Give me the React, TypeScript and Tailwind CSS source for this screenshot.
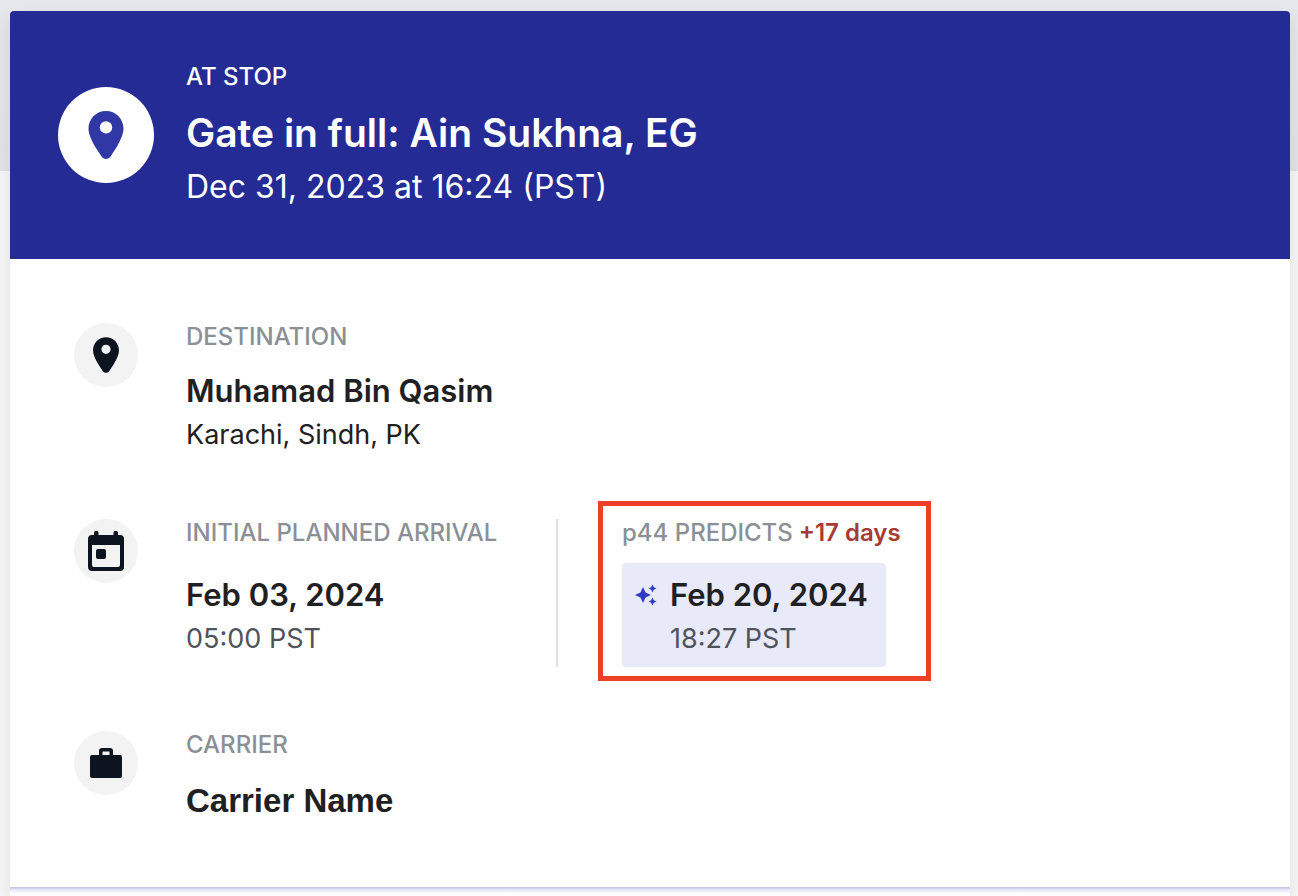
import type { ReactNode } from 'react';

interface DetailRowProps {
  icon: ReactNode;
  children: ReactNode;
}

const PIN_PATH =
  'M17.5 0C7.8 0 0 7.8 0 17.6 0 23.6 3.4 30 6.3 35.2L13 45.6C15 48.8 20 48.8 22 45.6L28.7 35.2C31.6 30 35 23.6 35 17.6 35 7.8 27.2 0 17.5 0ZM17.5 10.2a6.2 6.2 0 1 1 0 12.4A6.2 6.2 0 0 1 17.5 10.2Z';

function PinIcon({ className }: { className: string }) {
  return (
    <svg viewBox="0 0 35 48" fill="currentColor" fillRule="evenodd" className={className} aria-hidden="true">
      <path d={PIN_PATH} />
    </svg>
  );
}

function CalendarIcon() {
  return (
    <svg viewBox="0 0 36 40" fill="currentColor" fillRule="evenodd" className="h-10 w-9" aria-hidden="true">
      <path d="M6 4V2a2 2 0 0 1 4.5 0v2h15V2a2 2 0 0 1 4.5 0v2h2a4 4 0 0 1 4 4v28a4 4 0 0 1-4 4H4a4 4 0 0 1-4-4V8a4 4 0 0 1 4-4ZM4 14v20a2 2 0 0 0 2 2h24a2 2 0 0 0 2-2V14Z" />
      <rect x="8" y="18" width="10" height="10" rx="2" />
    </svg>
  );
}

function BriefcaseIcon() {
  return (
    <svg viewBox="0 0 32 30" fill="currentColor" fillRule="evenodd" className="h-[30px] w-8" aria-hidden="true">
      <path d="M9 7V3a3 3 0 0 1 3-3h8a3 3 0 0 1 3 3v4h7a2 2 0 0 1 2 2v19a2 2 0 0 1-2 2H2a2 2 0 0 1-2-2V9a2 2 0 0 1 2-2ZM12.5 3.5V7h7V3.5Z" />
    </svg>
  );
}

function SparkleIcon() {
  return (
    <svg viewBox="0 0 24 24" fill="currentColor" className="size-6" aria-hidden="true">
      <path d="M9 4 11.6 9.4 17 12 11.6 14.6 9 20 6.4 14.6 1 12 6.4 9.4Z" />
      <path d="M18.5 1.5 19.8 4.2 22.5 5.5 19.8 6.8 18.5 9.5 17.2 6.8 14.5 5.5 17.2 4.2Z" />
      <path d="M18.5 14.5 19.8 17.2 22.5 18.5 19.8 19.8 18.5 22.5 17.2 19.8 14.5 18.5 17.2 17.2Z" />
    </svg>
  );
}

function DetailRow({ icon, children }: DetailRowProps) {
  return (
    <section className="flex items-start gap-12">
      <div className="flex size-16 shrink-0 items-center justify-center rounded-full bg-[#f3f3f3] text-[#0c141f]">
        {icon}
      </div>
      {children}
    </section>
  );
}

function Label({ children }: { children: ReactNode }) {
  return <h2 className="text-[24px] leading-[28px] font-medium whitespace-nowrap text-[#8b8f96]">{children}</h2>;
}

export default function App() {
  return (
    <div className="min-h-screen overflow-hidden bg-[linear-gradient(#e7e8ed_0,#e3e4e9_171px,#f7f7f7_171px)] px-[10px] pt-[11px] font-['Inter',sans-serif] text-[#1f2022] lg:pr-2">
      <main className="rounded-t-[4px] bg-white shadow-[0_8px_20px_rgba(0,0,0,0.10)]">
        <header className="flex items-center gap-8 rounded-t-[4px] bg-[#242b94] px-12 py-12 text-white">
          <div className="flex size-24 shrink-0 items-center justify-center rounded-full bg-white">
            <PinIcon className="h-12 w-9 text-[#3038a6]" />
          </div>
          <div>
            <p className="text-[24px] leading-[36px] font-medium">AT STOP</p>
            <h1 className="mt-2 text-[39px] leading-[60px] font-semibold">Gate in full: Ain Sukhna, EG</h1>
            <p className="text-[32px] leading-[48px]">Dec 31, 2023 at 16:24 (PST)</p>
          </div>
        </header>

        <div className="flex flex-col gap-16 px-16 pt-16 pb-15">
          <DetailRow icon={<PinIcon className="h-9 w-[26px]" />}>
            <div>
              <Label>DESTINATION</Label>
              <p className="mt-4 text-[31px] leading-[48px] font-semibold">Muhamad Bin Qasim</p>
              <p className="text-[27px] leading-[40px]">Karachi, Sindh, PK</p>
            </div>
          </DetailRow>

          <DetailRow icon={<CalendarIcon />}>
            <div className="flex">
              <div className="w-[372px] border-r-2 border-[#dfe0e3]">
                <Label>INITIAL PLANNED ARRIVAL</Label>
                <div className="mt-4 py-2">
                  <p className="text-[31px] leading-[48px] font-semibold">Feb 03, 2024</p>
                  <p className="text-[27px] leading-[40px] text-[#4e535c]">05:00 PST</p>
                </div>
              </div>
              <div className="relative ml-16">
                <div className="flex gap-1.5">
                  <Label>p44 PREDICTS</Label>
                  <span className="text-[24px] leading-[28px] font-semibold whitespace-nowrap text-[#a63c33]">
                    +17 days
                  </span>
                </div>
                <div className="mt-4 flex w-[264px] gap-3 rounded-[4px] bg-[#e8e9f9] py-2 pl-3">
                  <div className="flex h-12 items-center text-[#303cc0]">
                    <SparkleIcon />
                  </div>
                  <div className="whitespace-nowrap">
                    <p className="text-[31px] leading-[48px] font-semibold">Feb 20, 2024</p>
                    <p className="text-[27px] leading-[40px] text-[#4e535c]">18:27 PST</p>
                  </div>
                </div>
                {/* highlight frame around the prediction */}
                <div className="pointer-events-none absolute -top-[18px] -right-[30px] -bottom-[14px] -left-6 border-[5px] border-[#ec4128]" />
              </div>
            </div>
          </DetailRow>

          <DetailRow icon={<BriefcaseIcon />}>
            <div>
              <Label>CARRIER</Label>
              <p className="mt-4 font-['Liberation_Sans',sans-serif] text-[33px] leading-[52px] font-bold">
                Carrier Name
              </p>
            </div>
          </DetailRow>
        </div>
        <div className="h-[9px] bg-[linear-gradient(#c3bfea,#e9e8f8_3px,#ffffff_7px)]" />
      </main>
    </div>
  );
}
